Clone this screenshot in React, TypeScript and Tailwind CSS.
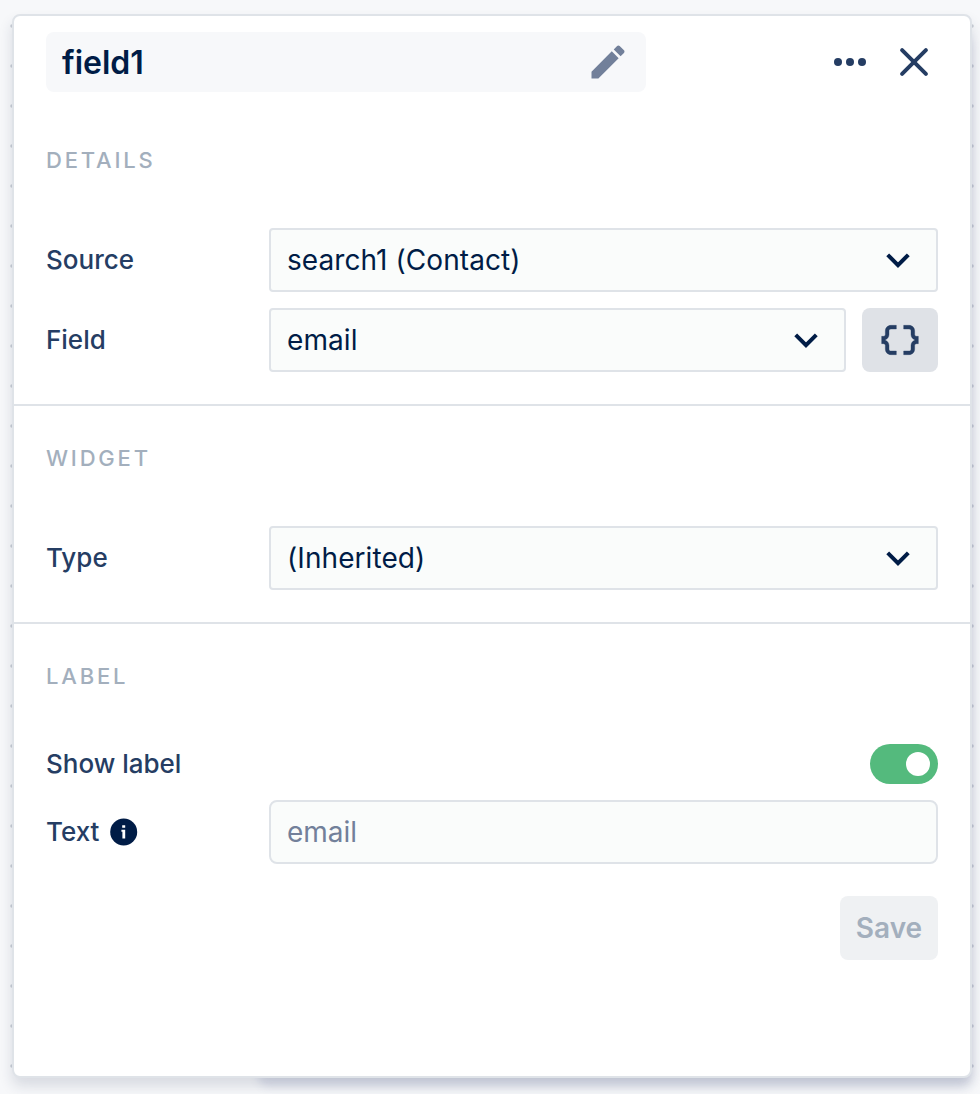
import type { ReactNode } from "react";

function Chevron() {
  return (
    <svg className="h-6 w-6 shrink-0" viewBox="0 0 24 24" fill="none" stroke="#001c46" strokeWidth="4">
      <path d="M1.7 6.8 12 17.1 22.3 6.8" />
    </svg>
  );
}

function Select({ value, className }: { value: string; className: string }) {
  return (
    <button
      className={`flex h-16 items-center justify-between rounded-[4px] border-2 border-[#dfe3e8] bg-[#fafcfb] pl-4 text-left text-[28px] tracking-[0.08px] text-[#001c46] ${className}`}
    >
      <span>{value}</span>
      <Chevron />
    </button>
  );
}

function Heading({ children }: { children: ReactNode }) {
  return (
    <h2 className="h-8 text-[22px] leading-8 font-medium tracking-[2.8px] text-[#a3afbd] uppercase">{children}</h2>
  );
}

function Label({ children }: { children: ReactNode }) {
  return (
    <div className="flex w-[223px] shrink-0 items-center pb-0.5 text-[26px] font-medium text-[#253d63]">
      {children}
    </div>
  );
}

const dots = Array.from({ length: 27 }, (_, i) => i);

export default function App() {
  return (
    <main className="relative isolate h-[1094px] w-[980px] overflow-hidden bg-[#f7f8fa] pt-[14px] pl-3 font-['Inter',sans-serif]">
      <svg className="absolute top-0 left-0 -z-20 h-full w-full" fill="#c9ced6">
        {dots.map((i) => (
          <g key={i}>
            <circle cx="12" cy={26 + i * 40} r="1.8" />
            <circle cx="972" cy={26 + i * 40} r="1.8" />
          </g>
        ))}
      </svg>
      <div className="absolute top-[30px] left-[260px] -z-10 h-[1046px] w-[710px] rounded-lg shadow-[0_8px_10px_2px_rgba(70,80,140,0.16)]" />

      <section className="h-[1064px] w-[960px] rounded-[8px] border-2 border-[#dfe3e8] bg-white shadow-[0_8px_14px_rgba(30,45,80,0.14)]">
        <header className="flex h-[92px] items-center px-8">
          <div className="flex h-[60px] w-[600px] items-center justify-between rounded-[8px] bg-[#f7f8fa] pr-4 pl-4">
            <span className="pt-0.5 text-[32px] font-semibold text-[#001c46]">field1</span>
            <svg className="h-11 w-11" viewBox="0 0 24 24" fill="#72809a">
              <path d="M3 17.25V21h3.75L17.81 9.94l-3.75-3.75L3 17.25zM20.71 7.04c.39-.39.39-1.02 0-1.41l-2.34-2.34c-.39-.39-1.02-.39-1.41 0l-1.83 1.83 3.75 3.75 1.83-1.83z" />
            </svg>
          </div>
          <button aria-label="More" className="ml-[188px]">
            <svg className="h-8 w-8" viewBox="0 0 32 32" fill="#253d63">
              <circle cx="4" cy="16" r="4" />
              <circle cx="16" cy="16" r="4" />
              <circle cx="28" cy="16" r="4" />
            </svg>
          </button>
          <button aria-label="Close" className="ml-8">
            <svg
              className="h-8 w-8"
              viewBox="0 0 32 32"
              fill="none"
              stroke="#253d63"
              strokeWidth="4"
              strokeLinecap="round"
            >
              <path d="M4.1 4.1 27.9 27.9M27.9 4.1 4.1 27.9" />
            </svg>
          </button>
        </header>

        <div className="h-[298px] border-b-2 border-[#dfe3e8] px-8 pt-9">
          <Heading>Details</Heading>
          <div className="mt-[52px] flex">
            <Label>Source</Label>
            <Select value="search1 (Contact)" className="w-[669px] pr-[26px]" />
          </div>
          <div className="mt-4 flex">
            <Label>Field</Label>
            <Select value="email" className="w-[577px] pr-[26px]" />
            <button className="ml-4 flex h-16 w-[76px] items-center justify-center rounded-[8px] bg-[#dfe2e7]">
              <svg
                className="h-11 w-11"
                viewBox="0 0 24 24"
                fill="#253d63"
                stroke="#253d63"
                strokeWidth="0.2"
              >
                <path d="M4 7v2c0 .55-.45 1-1 1H2v4h1c.55 0 1 .45 1 1v2c0 1.65 1.35 3 3 3h3v-2H7c-.55 0-1-.45-1-1v-2c0-1.3-.84-2.42-2-2.83v-.34C5.16 11.42 6 10.3 6 9V7c0-.55.45-1 1-1h3V4H7C5.35 4 4 5.35 4 7z" />
                <path d="M21 10c-.55 0-1-.45-1-1V7c0-1.65-1.35-3-3-3h-3v2h3c.55 0 1 .45 1 1v2c0 1.3.84 2.42 2 2.83v.34c-1.16.41-2 1.52-2 2.83v2c0 .55-.45 1-1 1h-3v2h3c1.65 0 3-1.35 3-3v-2c0-.55.45-1 1-1h1v-4h-1z" />
              </svg>
            </button>
          </div>
        </div>

        <div className="h-[218px] border-b-2 border-[#dfe3e8] px-8 pt-9">
          <Heading>Widget</Heading>
          <div className="mt-[52px] flex">
            <Label>Type</Label>
            <Select value="(Inherited)" className="w-[669px] pr-[26px]" />
          </div>
        </div>

        <div className="px-8 pt-9">
          <Heading>Label</Heading>
          <div className="mt-[52px] flex h-10 justify-between">
            <Label>Show label</Label>
            <button
              role="switch"
              aria-checked="true"
              className="flex w-[68px] items-center justify-end rounded-full bg-[#54ba7d] pr-2"
            >
              <span className="h-6 w-6 rounded-full bg-white" />
            </button>
          </div>
          <div className="mt-4 flex">
            <Label>
              Text
              <svg className="mt-0.5 ml-[11px] h-7 w-7" viewBox="0 0 28 28">
                <circle cx="13.7" cy="14" r="13.5" fill="#001c46" />
                <path d="M12.2 7.2h3v2.6h-3zM11.4 11.8h3.8v8.7h-2.8v-6.7h-1z" fill="#fff" />
              </svg>
            </Label>
            <input
              placeholder="email"
              className="h-16 w-[669px] rounded-[8px] border-2 border-[#dfe3e8] bg-[#fafcfb] px-4 text-[28px] placeholder:text-[#72809a]"
            />
          </div>
          <div className="mt-8 flex justify-end">
            <button className="h-16 w-[98px] rounded-[8px] bg-[#eff1f3] text-[28px] font-semibold text-[#a3afbd]">
              Save
            </button>
          </div>
        </div>
      </section>
    </main>
  );
}
